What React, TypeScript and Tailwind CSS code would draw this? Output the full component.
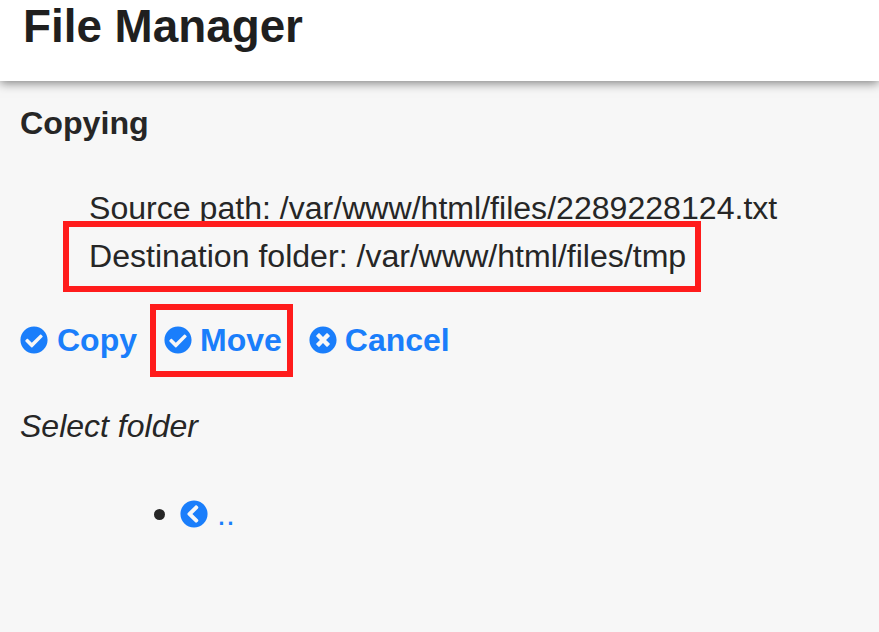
import { FaCheckCircle, FaChevronCircleLeft, FaTimesCircle } from "react-icons/fa";

const App = () => {
  return (
    <div className="relative h-[632px] w-[879px] overflow-hidden bg-[#f7f7f7] font-['Liberation_Sans',sans-serif] text-[#262626]">
      <header className="h-[81px] bg-white pl-[23px] pt-[3px] shadow-[0_2px_10px_rgba(0,0,0,0.5)]">
        <h1 className="text-[45.8px] leading-[48px] font-bold text-[#1f1f1f]">File Manager</h1>
      </header>

      <main className="px-[20px]">
        <h2 className="mt-[22px] text-[32.2px] leading-[40px] font-bold">Copying</h2>

        <div className="mt-[41px] pl-[69px] text-[32.1px] leading-[48px]">
          <div>Source path: /var/www/html/files/2289228124.txt</div>
          <div className="relative">
            Destination folder: /var/www/html/files/tmp
            <div className="absolute left-[-26px] top-[-11px] h-[71px] w-[638px] border-[6px] border-[#ff1c1c]" />
          </div>
        </div>

        <div className="mt-[36px] flex h-[48px] items-center text-[32px] font-bold text-[#1a7efb]">
          <a className="flex items-center gap-[9px]">
            <FaCheckCircle className="size-[28px]" />
            Copy
          </a>
          <a className="relative ml-[27px] flex items-center gap-[8px]">
            <FaCheckCircle className="size-[28px]" />
            Move
            <div className="absolute left-[-14px] top-[-12px] h-[73px] w-[143px] border-[6px] border-[#ff1c1c]" />
          </a>
          <a className="ml-[27px] flex items-center gap-[8px]">
            <FaTimesCircle className="size-[28px]" />
            Cancel
          </a>
        </div>

        <p className="mt-[38px] text-[32px] leading-[48px] italic">Select folder</p>

        <ul className="mt-[40px] pl-[134px] text-[32px] leading-[48px]">
          <li className="flex items-center gap-[15px]">
            <span className="size-[11px] rounded-full bg-[#262626]" />
            <a className="inline-flex items-center gap-[9px] text-[#1a7efb]">
              <FaChevronCircleLeft className="size-[28px]" />
              ..
            </a>
          </li>
        </ul>
      </main>
    </div>
  );
};

export default App;
